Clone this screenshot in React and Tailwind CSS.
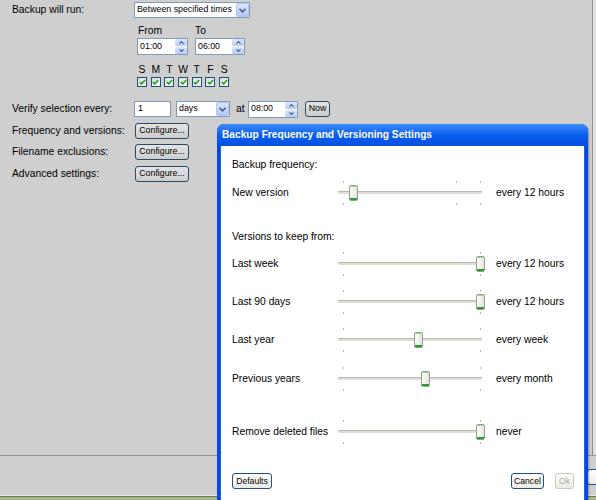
// Backup settings page with "Backup Frequency and Versioning Settings" dialog
import React from 'react';

function DropArrow() {
  return (
    <div className="flex h-[14px] w-[13px] items-center justify-center rounded-[2px] border border-[#b4c6f4] bg-linear-to-b from-[#dce6fd] to-[#b2c7f7]">
      <svg width="7" height="5" viewBox="0 0 7 5">
        <path d="M0.5 0.8 L3.5 3.8 L6.5 0.8" fill="none" stroke="#4d6185" strokeWidth="1.6" />
      </svg>
    </div>
  );
}

function Select({ text, className }) {
  return (
    <div className={`flex h-[16px] items-center justify-between border border-[#7f9db9] bg-white pl-[2px] pr-[0px] text-[8.8px] ${className}`}>
      <span>{text}</span>
      <DropArrow />
    </div>
  );
}

function Spinner({ value, className }) {
  return (
    <div className={`flex h-[17px] items-center justify-between border border-[#7f9db9] bg-white pl-[2px] text-[8.8px] ${className}`}>
      <span>{value}</span>
      <div className="flex h-[15px] w-[12px] flex-col gap-px">
        <div className="flex flex-1 items-center justify-center rounded-[2px] bg-linear-to-b from-[#dce6fd] to-[#b6c9f7]">
          <svg width="5" height="3" viewBox="0 0 5 3">
            <path d="M0.5 2.6 L2.5 0.6 L4.5 2.6" fill="none" stroke="#4d6185" strokeWidth="1.2" />
          </svg>
        </div>
        <div className="flex flex-1 items-center justify-center rounded-[2px] bg-linear-to-b from-[#dce6fd] to-[#b6c9f7]">
          <svg width="5" height="3" viewBox="0 0 5 3">
            <path d="M0.5 0.4 L2.5 2.4 L4.5 0.4" fill="none" stroke="#4d6185" strokeWidth="1.2" />
          </svg>
        </div>
      </div>
    </div>
  );
}

function Check() {
  return (
    <div className="flex h-[10px] w-[10px] items-center justify-center border border-[#1c5180] bg-linear-to-br from-[#dcdcd6] to-[#fbfbf9]">
      <svg width="7" height="6" viewBox="0 0 7 6">
        <path d="M0.8 3 L2.7 4.8 L6.2 1" fill="none" stroke="#21a121" strokeWidth="1.6" />
      </svg>
    </div>
  );
}

function GreyButton({ children, className }) {
  return (
    <div className={`flex h-[16px] items-center justify-center rounded-[3px] border border-[#2b4a6a] bg-linear-to-b from-[#e4e4e4] to-[#cdcdcd] text-[8.8px] ${className}`}>
      {children}
    </div>
  );
}

function Slider({ pos, midTick }) {
  return (
    <div className="relative h-[24px] w-[144px]">
      <div className="absolute left-[5px] top-0 h-[2px] w-px bg-[#b4b4b4]" />
      <div className="absolute left-[142px] top-0 h-[2px] w-px bg-[#b4b4b4]" />
      <div className="absolute left-[5px] bottom-0 h-[2px] w-px bg-[#b4b4b4]" />
      <div className="absolute left-[142px] bottom-0 h-[2px] w-px bg-[#b4b4b4]" />
      {midTick && (
        <>
          <div className="absolute left-[118px] top-0 h-[2px] w-px bg-[#b4b4b4]" />
          <div className="absolute left-[118px] bottom-0 h-[2px] w-px bg-[#b4b4b4]" />
        </>
      )}
      <div className="absolute left-0 right-0 top-[10px] h-[3px] rounded-[1px] border-t border-[#b9b9b0] bg-[#deded6]" />
      <div
        className="absolute top-[4px] flex h-[16px] w-[9px] flex-col overflow-hidden rounded-[2px] border border-[#9a9a94] bg-linear-to-r from-[#fbfbf9] to-[#e6e6e0]"
        style={{ left: pos - 4.5 }}
      >
        <div className="h-px bg-[#8fe08f]" />
        <div className="flex-1" />
        <div className="h-[2px] bg-[#21a121]" />
      </div>
    </div>
  );
}

function SliderRow({ label, pos, value, midTick, className }) {
  return (
    <div className={`flex h-[24px] items-center ${className}`}>
      <span className="w-[106px]">{label}</span>
      <Slider pos={pos} midTick={midTick} />
      <span className="ml-[14px]">{value}</span>
    </div>
  );
}

function DialogButton({ children, disabled, className }) {
  return (
    <div
      className={`flex h-[16px] items-center justify-center rounded-[3px] border bg-linear-to-b from-[#ffffff] to-[#ecebe6] text-[8.6px] ${
        disabled ? 'border-[#cac8bb] text-[#aca899]' : 'border-[#1f4e8c] text-black'
      } ${className}`}
    >
      {children}
    </div>
  );
}

export default function App() {
  const days = ['S', 'M', 'T', 'W', 'T', 'F', 'S'];

  return (
    <div className="relative h-[500px] w-[596px] overflow-hidden bg-[#cfcfcf] font-['Liberation_Sans',Arial,sans-serif] text-[10.3px] text-black">
      {/* Main settings panel */}
      <div className="flex h-[455px]">
        <div className="flex w-[593px] flex-col border-r border-[#8c9192] pt-[2px]">
          {/* Backup will run */}
          <div className="flex">
            <div className="flex h-[16px] w-[134px] items-center pl-[12px]">Backup will run:</div>
            <div className="flex flex-col">
              <Select text="Between specified times" className="w-[116px]" />
              <div className="mt-[7px] flex h-[12px] items-center pl-[4px]">
                <span className="w-[57px]">From</span>
                <span>To</span>
              </div>
              <div className="mt-[1px] flex gap-[7px] pl-[3px]">
                <Spinner value="01:00" className="w-[51px]" />
                <Spinner value="06:00" className="w-[50px]" />
              </div>
              <div className="mt-[7px] flex h-[12px] gap-[3.7px] pl-[3px]">
                {days.map((d, i) => (
                  <span key={i} className="w-[10px] text-center">{d}</span>
                ))}
              </div>
              <div className="mt-[3px] flex gap-[3.7px] pl-[3px]">
                {days.map((d, i) => (
                  <Check key={i} />
                ))}
              </div>
            </div>
          </div>

          {/* Verify selection */}
          <div className="mt-[14px] flex h-[16px] items-center">
            <div className="w-[134px] pl-[12px]">Verify selection every:</div>
            <div className="flex h-[16px] w-[37px] items-center border border-[#7f9db9] bg-white pl-[3px] text-[8.8px]">1</div>
            <Select text="days" className="ml-[5px] w-[54px]" />
            <span className="ml-[6px] w-[12px]">at</span>
            <Spinner value="08:00" className="w-[50px]" />
            <GreyButton className="ml-[7px] w-[25px]">Now</GreyButton>
          </div>

          <div className="mt-[6px] flex h-[16px] items-center">
            <div className="w-[135px] pl-[12px]">Frequency and versions:</div>
            <GreyButton className="w-[54px]">Configure...</GreyButton>
          </div>
          <div className="mt-[5px] flex h-[16px] items-center">
            <div className="w-[135px] pl-[12px]">Filename exclusions:</div>
            <GreyButton className="w-[54px]">Configure...</GreyButton>
          </div>
          <div className="mt-[6px] flex h-[16px] items-center">
            <div className="w-[135px] pl-[12px]">Advanced settings:</div>
            <GreyButton className="w-[54px]">Configure...</GreyButton>
          </div>
        </div>
        <div className="flex-1 bg-[#e2e2e2]" />
      </div>

      {/* Bottom bar of the parent window (its button sits mostly under the dialog) */}
      <div className="flex h-[40px] items-center border-t border-[#8e9896] pl-[587px] pt-[2px]">
        <DialogButton className="w-[40px] shrink-0" />
      </div>
      <div className="h-px bg-[#e8e8e4]" />
      <div className="h-px bg-[#6e7a5c]" />
      <div className="h-[4px] bg-[#a9b78e]" />

      {/* Modal dialog */}
      <div className="absolute left-[217px] top-[124px] flex h-[390px] w-[371px] flex-col overflow-hidden rounded-t-[7px] bg-[#0a45dd] shadow-[1px_1px_2px_rgba(0,0,0,0.3)]">
        <div className="flex h-[22px] shrink-0 items-center bg-linear-to-b from-[#3d8cf8] via-[#0a5ef0] to-[#0650e0] pl-[5px] text-[10.2px] font-bold text-white">
          Backup Frequency and Versioning Settings
        </div>
        <div className="mx-[3px] flex flex-1 flex-col border-x border-[#1766ef] bg-white pl-[11px] pr-[10px]">
          <div className="mt-[13px] flex h-[12px] items-center">Backup frequency:</div>
          <SliderRow className="mt-[10px]" label="New version" pos={15.5} value="every 12 hours" midTick />

          <div className="mt-[26px] flex h-[12px] items-center">Versions to keep from:</div>
          <SliderRow className="mt-[9px]" label="Last week" pos={142} value="every 12 hours" />
          <SliderRow className="mt-[14px]" label="Last 90 days" pos={142} value="every 12 hours" />
          <SliderRow className="mt-[14px]" label="Last year" pos={80.5} value="every week" />
          <SliderRow className="mt-[15px]" label="Previous years" pos={87} value="every month" />
          <SliderRow className="mt-[29px]" label="Remove deleted files" pos={142} value="never" />

          <div className="mt-[29px] flex items-center">
            <DialogButton className="w-[40px]">Defaults</DialogButton>
            <div className="flex-1" />
            <DialogButton className="w-[33px]">Cancel</DialogButton>
            <DialogButton disabled className="ml-[11px] w-[19px]">Ok</DialogButton>
          </div>
        </div>
      </div>
    </div>
  );
}
